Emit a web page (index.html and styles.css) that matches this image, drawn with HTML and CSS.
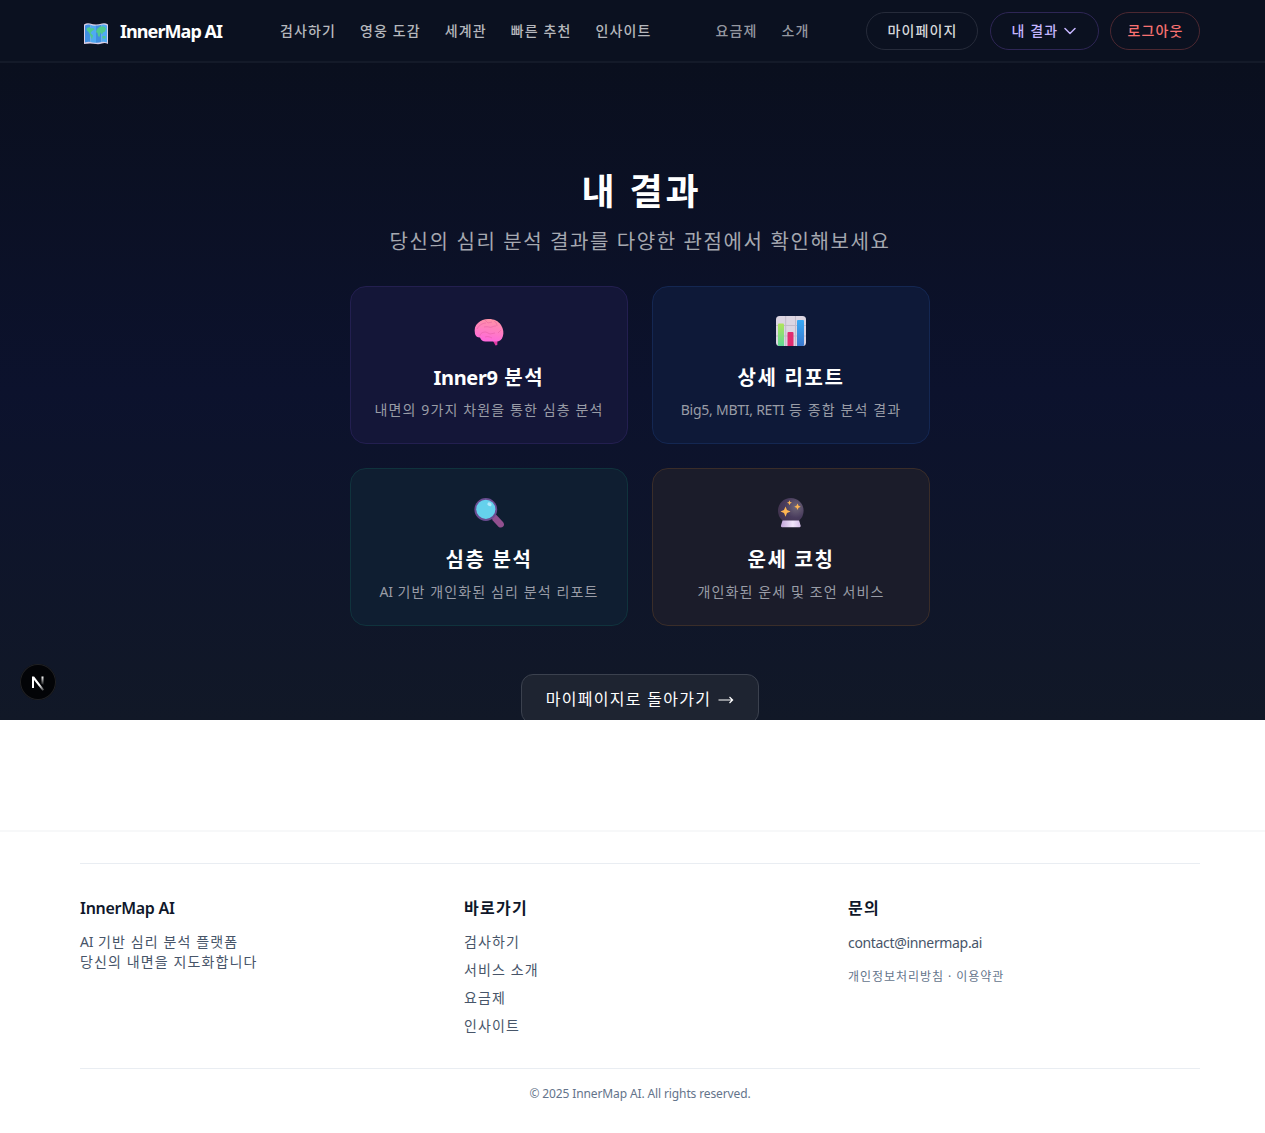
FILE: index.html
```html
<!DOCTYPE html>
<html lang="ko">
<head>
<meta charset="utf-8">
<title>InnerMap AI</title>
<link rel="stylesheet" href="styles.css">
</head>
<body>
<div class="page">
  <header class="nav">
    <div class="nav-inner">
      <a class="brand">
        <svg class="brand-icon" width="26" height="24" viewBox="0 0 26 24">
          <path d="M1 2.500Q4 .5 7 1.500T13 2.500T19 1.500T25 2.500V22Q22 20.500 19 21.500T13 22T7 21.500T1 22Z" fill="#d9cfe6"/>
          <path d="M2 3.500Q5 1.800 7.500 2.800V20Q5 19.500 2 20.500Z" fill="#3f8fe0"/>
          <path d="M7.500 2.800Q10 4.200 13 3.500V20.800Q10 21 7.500 20Z" fill="#50aaf2"/>
          <path d="M13 3.500Q16 3.800 18.500 2.800V20Q16 21 13 20.800Z" fill="#3f8fe0"/>
          <path d="M18.500 2.800Q21 1.800 24 3.500V20.500Q21 19.500 18.500 20Z" fill="#50aaf2"/>
          <path d="M4 6l3-1 1 1.500L10.500 6l1 1.500L9 9l-1.500 2L10 13.500 9 17.500 7.500 14 6 10.500 3.500 8zM14 7l3-2.500 4 0 2 2-1 3-2 1-1 2-1.500-2-1 4.500-1.500-1-.5-3-1.500-1zM19.500 14h3v2.500h-3z" fill="#4fc98c"/>
        </svg>
        <span class="brand-name">InnerMap AI</span>
      </a>
      <nav class="links">
        <a>검사하기</a><a>영웅 도감</a><a>세계관</a><a>빠른 추천</a><a>인사이트</a>
      </nav>
      <nav class="links links-minor"><a>요금제</a><a>소개</a></nav>
      <div class="actions">
        <a class="pill pill-page">마이페이지</a>
        <a class="pill pill-result">내 결과
          <svg width="12" height="8" viewBox="0 0 12 8" fill="none" stroke="currentColor" stroke-width="1.500" stroke-linecap="round" stroke-linejoin="round"><path d="M1 1.500l5 5 5-5"/></svg>
        </a>
        <a class="pill pill-logout">로그아웃</a>
      </div>
    </div>
  </header>

  <main class="hero">
    <h1>내 결과</h1>
    <p class="lead">당신의 심리 분석 결과를 다양한 관점에서 확인해보세요</p>
    <div class="cards">
      <a class="card card-purple">
        <svg class="card-icon" width="32" height="32" viewBox="0 0 32 32">
          <defs><linearGradient id="brain" x1="0.600" y1="0" x2="0.400" y2="1"><stop offset="0" stop-color="#ff93a5"/><stop offset="1" stop-color="#ff68dd"/></linearGradient></defs>
          <path d="M19.500 25l3 5.500 1.800-.5.200-5z" fill="#e03aa5"/>
          <path d="M2 19C1 14 2 10.500 5 8 8 4.800 12 3.800 16 4c5 0 9.500 2 12 6 2.500 4 3 8 1.800 11.500-1 3.200-3.300 5-6.300 5H13c-3 .2-5-1-6-4-2 .2-4.200-.8-5-3.500z" fill="url(#brain)"/>
          <path d="M4 14c2-4 6-6 9-6m-1-3l3 3 4-1m2-1c2 1 3 3 3 5m-13 1c4-1 6 1 8 0s3-1 4-1M7 21c0-3 3-4 6-4m0 0l4 2 5-1m3 0l3-3M12 22c3-1 5 0 7 1" fill="none" stroke="#df579e" stroke-width=".9" opacity=".5"/>
        </svg>
        <h2><span class="latin">Inner9</span> 분석</h2>
        <p>내면의 9가지 차원을 통한 심층 분석</p>
      </a>
      <a class="card card-blue">
        <svg class="card-icon" width="32" height="32" viewBox="0 0 32 32">
          <defs>
            <linearGradient id="barA" x1="0" y1="0" x2="0" y2="1"><stop offset="0" stop-color="#b0e45a"/><stop offset="1" stop-color="#5fd795"/></linearGradient>
            <linearGradient id="barB" x1="0" y1="0" x2="0" y2="1"><stop offset="0" stop-color="#38a9f5"/><stop offset="1" stop-color="#3b78ce"/></linearGradient>
          </defs>
          <rect x="1" y="1" width="30" height="30" rx="3.500" fill="#dcd5e2"/>
          <path d="M10.700 1v30M20.500 1v30M1 10.500h30M1 21h30" stroke="#c2bbcb" stroke-width="1"/>
          <path d="M3 9.500q0-1 1-1h4q1 0 1 1V31H4q-1 0-1-1z" fill="url(#barA)"/>
          <path d="M12.500 18q0-1 1-1h4q1 0 1 1v13h-6z" fill="#e12c70"/>
          <path d="M22 6q0-1 1-1h5q1 0 1 1v24q0 1-1 1h-6z" fill="url(#barB)"/>
        </svg>
        <h2>상세 리포트</h2>
        <p><span class="latin">Big5, MBTI, RETI</span> 등 종합 분석 결과</p>
      </a>
      <a class="card card-green">
        <svg class="card-icon" width="32" height="32" viewBox="0 0 32 32">
          <path d="M18.500 20.500l4-3.500 7.500 8q2 2.500.2 4.500-2 2-4.500.4l-6-6.400z" fill="#92508f"/>
          <circle cx="12.800" cy="12.500" r="11.400" fill="#6a4c91"/>
          <circle cx="12.800" cy="12.300" r="9.600" fill="#65d1ec"/>
          <ellipse cx="16.500" cy="7.300" rx="2.200" ry="1.800" fill="#b2e9fb" transform="rotate(30 16.500 7.300)"/>
        </svg>
        <h2>심층 분석</h2>
        <p><span class="latin">AI</span> 기반 개인화된 심리 분석 리포트</p>
      </a>
      <a class="card card-amber">
        <svg class="card-icon" width="32" height="32" viewBox="0 0 32 32">
          <defs>
            <radialGradient id="ball" cx=".7" cy=".35" r=".7"><stop offset="0" stop-color="#706879"/><stop offset=".6" stop-color="#493c5d"/><stop offset="1" stop-color="#423450"/></radialGradient>
            <linearGradient id="base"><stop offset="0" stop-color="#c2a5d9"/><stop offset=".6" stop-color="#f1e6fa"/><stop offset="1" stop-color="#d4bde7"/></linearGradient>
          </defs>
          <circle cx="15.800" cy="13.800" r="12.800" fill="url(#ball)"/>
          <path d="M7.500 23.500h16.600l1.500 5q.4 1.800-1 1.800H7q-1.400 0-1-1.800z" fill="url(#base)"/>
          <path d="M10.500 9.500l1.500 3.500 3.500 1.500L12 16l-1.500 3.700L9 16l-3.500-1.500L9 13zM22.500 6.500l1 2.200 2.200 1-2.200 1-1 2.200-1-2.200-2.200-1 2.200-1zM14.500 3.300l.7 1.800 1.800.7-1.800.7-.7 1.800-.7-1.800-1.800-.7 1.800-.7z" fill="#ffb652"/>
        </svg>
        <h2>운세 코칭</h2>
        <p>개인화된 운세 및 조언 서비스</p>
      </a>
    </div>
    <a class="back">마이페이지로 돌아가기 <svg width="16" height="10" viewBox="0 0 16 10" fill="none" stroke="currentColor" stroke-width="1.200"><path d="M.5 6h14M11.500 3L14.600 6l-3.100 3"/></svg></a>
    <div class="badge">
      <svg width="36" height="36" viewBox="0 0 36 36">
        <defs>
          <linearGradient id="nDiag" x1="0" y1="0" x2="1" y2="1"><stop offset=".6" stop-color="#fff"/><stop offset="1" stop-color="#fff" stop-opacity=".15"/></linearGradient>
          <linearGradient id="nSide" x1="0" y1="0" x2="0" y2="1"><stop offset="0" stop-color="#fff"/><stop offset="1" stop-color="#fff" stop-opacity="0"/></linearGradient>
        </defs>
        <path d="M12 24V12.500h2.100L24.200 25.700l-1.700 1L14 16V24z" fill="url(#nDiag)"/>
        <path d="M21.500 12.500h2v9l-2-2.300z" fill="url(#nSide)"/>
      </svg>
    </div>
  </main>

  <footer class="footer">
    <div class="footer-inner">
      <div class="columns">
        <section>
          <h3 class="latin">InnerMap AI</h3>
          <p><span class="latin">AI</span> 기반 심리 분석 플랫폼<br>당신의 내면을 지도화합니다</p>
        </section>
        <section>
          <h3>바로가기</h3>
          <ul><li>검사하기</li><li>서비스 소개</li><li>요금제</li><li>인사이트</li></ul>
        </section>
        <section>
          <h3>문의</h3>
          <p class="email">contact@innermap.ai</p>
          <p class="legal">개인정보처리방침 · 이용약관</p>
        </section>
      </div>
      <p class="copyright">© 2025 InnerMap AI. All rights reserved.</p>
    </div>
  </footer>
</div>
</body>
</html>
```
FILE: styles.css
```css
* { box-sizing: border-box; margin: 0; padding: 0; letter-spacing: 0.08em; }
html { overflow: hidden; }
body {
  overflow: hidden;
  background: #fff;
  font-family: "Noto Sans", "Noto Sans CJK KR", sans-serif;
  font-size: 14px;
  line-height: 20px;
}
.page { width: 1280px; }
.latin { letter-spacing: -0.018em; }
svg { display: block; flex: none; }

.nav {
  height: 63px;
  background: #0b1120;
  border-bottom: 2px solid #141a29;
}
.nav-inner {
  display: flex;
  align-items: center;
  width: 1120px;
  height: 62px;
  margin: 0 auto;
  white-space: nowrap;
}
.brand { display: flex; align-items: center; gap: 11px; width: 200px; padding-left: 3px; }
.brand-icon { margin-top: 5px; }
.brand-name { font-size: 18px; font-weight: 700; letter-spacing: -0.052em; color: #fff; }
.links { display: flex; gap: 24px; color: #b6b8bd; font-weight: 500; }
.links-minor { margin-left: 64px; color: #9598a0; }
.actions { display: flex; gap: 11.5px; margin-left: auto; }
.pill {
  display: flex;
  align-items: center;
  justify-content: center;
  gap: 6px;
  height: 38px;
  border: 1px solid;
  border-radius: 19px;
  font-weight: 500;
}
.pill-page { width: 112px; padding-left: 1px; color: #d5d7da; border-color: #262b3a; }
.pill-result { width: 109px; color: #c4b5fd; border-color: #2e2655; }
.pill-logout { width: 90px; padding-left: 1px; color: #f87171; border-color: #4b2831; }

.hero {
  position: relative;
  display: flex;
  flex-direction: column;
  align-items: center;
  height: 657px;
  padding-top: 109px;
  overflow: hidden;
  background: linear-gradient(#0a0f1e, #0c122d 50%, #111827);
}
h1 { padding-left: 3px; font-size: 36px; line-height: 40px; font-weight: 700; color: #fff; }
.lead { margin-top: 16px; font-size: 20px; line-height: 28px; color: #a5a8b0; }
.cards { display: grid; grid-template-columns: 278px 278px; gap: 24px; margin-top: 30px; }
.card {
  display: flex;
  flex-direction: column;
  align-items: center;
  height: 158px;
  padding-top: 28px;
  border: 1px solid;
  border-radius: 16px;
  white-space: nowrap;
}
.card h2 { margin-top: 17px; font-size: 20px; line-height: 28px; font-weight: 700; color: #fff; }
.card p { margin-top: 8px; color: #999ca6; }
.card-purple { background: #141638; border-color: #231f50; }
.card-blue { background: #0e1938; border-color: #142752; }
.card-green { background: #0f1e31; border-color: #10333d; }
.card-amber { background: #1b1c2a; border-color: #3a2d29; }
.back {
  display: flex;
  align-items: center;
  justify-content: center;
  gap: 7px;
  flex: none;
  width: 238px;
  height: 50px;
  margin-top: 48px;
  border: 1px solid #3b414e;
  border-radius: 12px;
  background: #1e2431;
  color: #fff;
  font-size: 16px;
}
.badge {
  position: absolute;
  left: 20px;
  bottom: 20px;
  width: 36px;
  height: 36px;
  border-radius: 50%;
  background: #030407;
  box-shadow: inset 0 0 0 1px #202125;
}

.footer { margin-top: 110px; padding: 31px 80px 32px; border-top: 2px solid #f7f8f9; color: #475569; }
.footer-inner { border-top: 1px solid #e9edf2; }
.columns {
  display: grid;
  grid-template-columns: repeat(3, 352px);
  gap: 32px;
  padding: 32px 0;
  border-bottom: 1px solid #e9edf2;
}
h3 { margin-bottom: 12px; font-size: 16px; line-height: 24px; font-weight: 600; color: #0f172a; }
ul { display: grid; gap: 8px; list-style: none; }
.email { padding-top: 1px; letter-spacing: -0.024em; }
.legal { margin-top: 16px; font-size: 12px; line-height: 16px; color: #64748b; }
.copyright { padding-top: 17px; font-size: 12px; line-height: 16px; letter-spacing: -0.01em; text-align: center; color: #64748b; }
```
